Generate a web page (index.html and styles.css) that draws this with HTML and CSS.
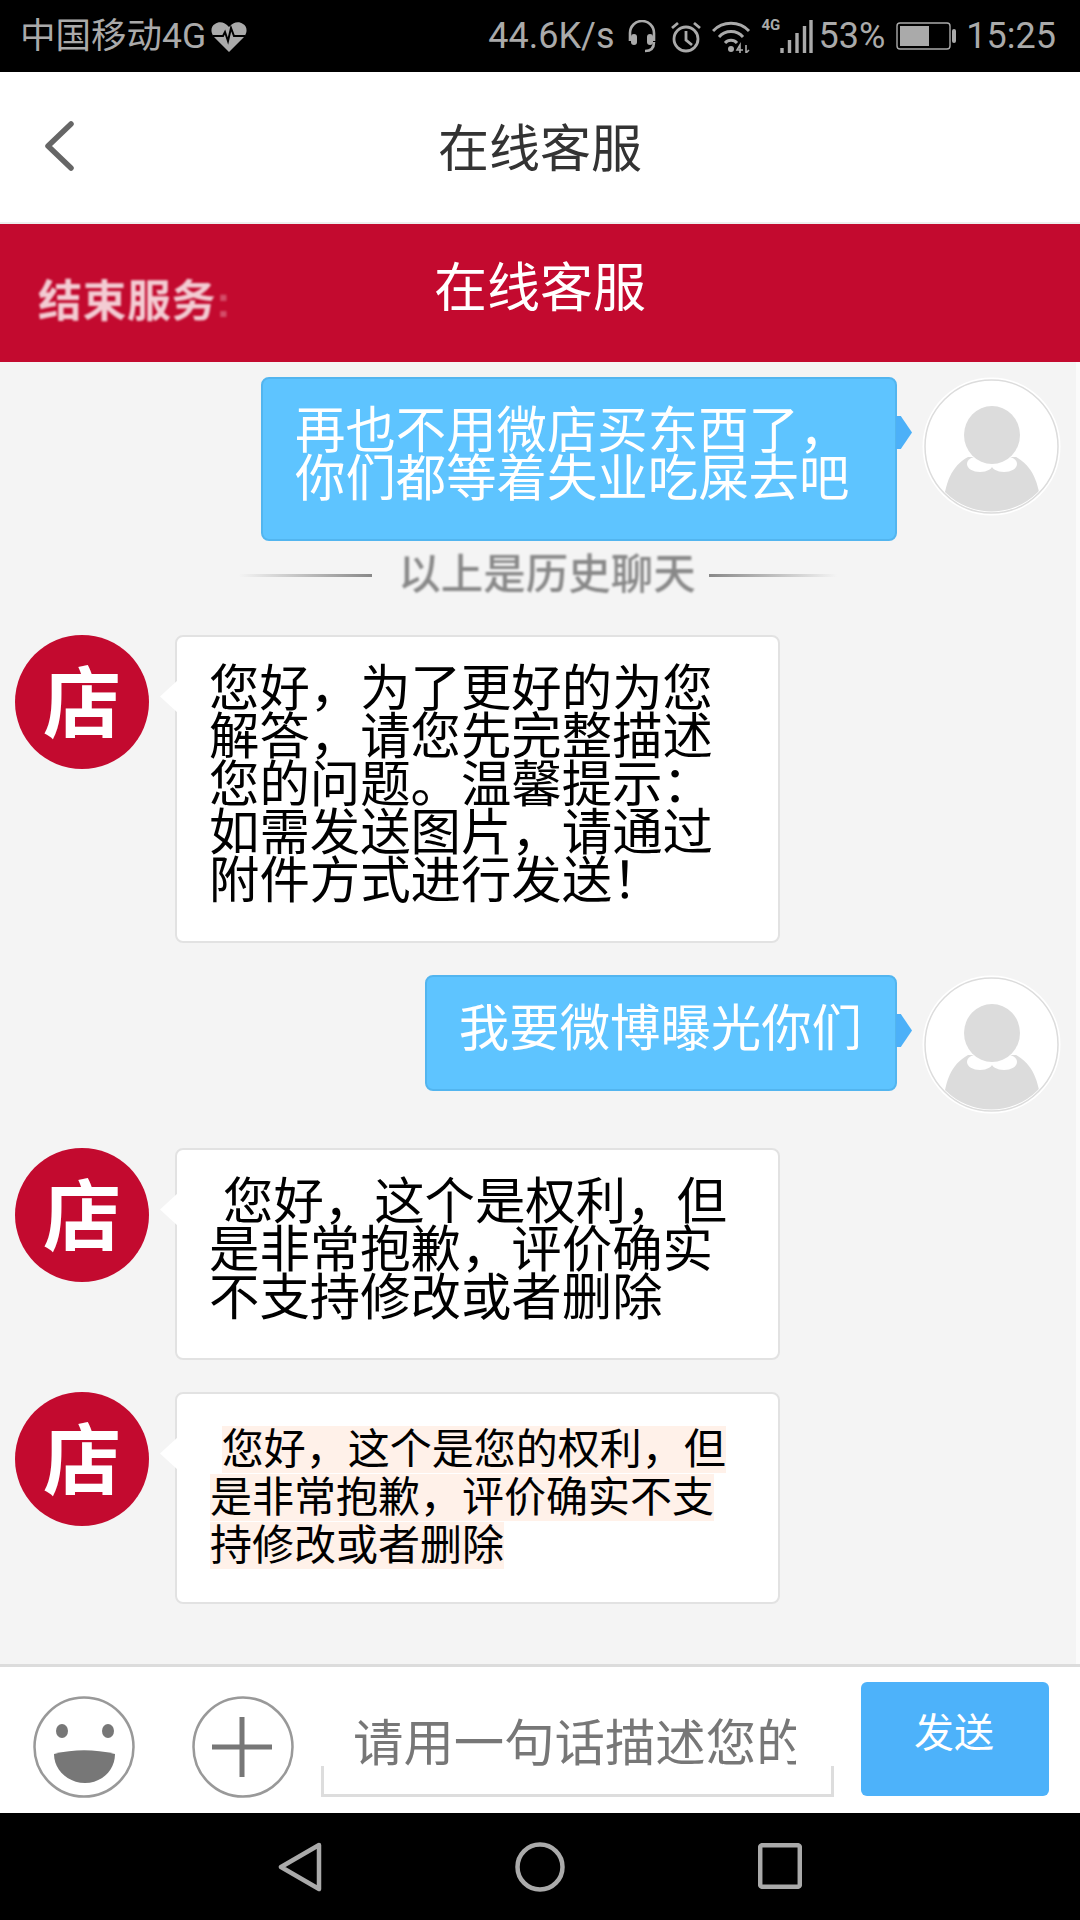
FILE: index.html
```html
<!DOCTYPE html>
<html lang="zh-CN">
<head>
<meta charset="utf-8">
<title>在线客服</title>
<link rel="stylesheet" href="styles.css">
</head>
<body>
<div class="screen">
  <header class="status">
    <div class="status-left">
      <span class="carrier">中国移动4G</span>
      <svg class="i-heart" viewBox="0 0 36 30"><path d="M18 30 3 15C-1 10 0 4 4 2c4-3 10-2 14 3 4-5 10-6 14-3 4 2 5 8 1 13Z" fill="#aaa"/><path d="M2 14h10l2-4 3 9 3-13 3 8h11" fill="none" stroke="#000" stroke-width="2"/></svg>
    </div>
    <div class="status-right">
      <span class="speed">44.6K/s</span>
      <svg class="i-headset" viewBox="0 0 30 33"><path d="M3 21V13a12 12 0 0 1 24 0v8" fill="none" stroke="#aaa" stroke-width="2.6"/><rect x="4" y="14" width="6" height="11" rx="3" fill="#aaa"/><rect x="20" y="14" width="6" height="11" rx="3" fill="#aaa"/><path d="M27 22c0 6-3 9-9 9" fill="none" stroke="#aaa" stroke-width="2.6"/></svg>
      <svg class="i-alarm" viewBox="0 0 32 33"><circle cx="16" cy="19" r="12" fill="none" stroke="#aaa" stroke-width="2.8"/><path d="M16 11v9l6 5M2 8l6-5M30 8l-6-5" fill="none" stroke="#aaa" stroke-width="2.8"/></svg>
      <svg class="i-wifi" viewBox="0 0 40 33"><path d="M1 11a25 25 0 0 1 36 0M7 17a16 16 0 0 1 24 0M13 23a8 8 0 0 1 12 0" fill="none" stroke="#aaa" stroke-width="3"/><circle cx="19" cy="29" r="3" fill="#aaa"/><path d="M28 33v-8l-3 5h6M34 25v8l3-3" fill="none" stroke="#aaa" stroke-width="1.6"/></svg>
      <span class="net">4G</span>
      <svg class="i-signal" viewBox="0 0 33 33"><path d="M2 28v5M9.5 20v13M17 13v20M24.5 6v27M31 0v33" stroke="#aaa" stroke-width="3.4" fill="none"/></svg>
      <span class="pct">53%</span>
      <svg class="i-battery" viewBox="0 0 61 28"><rect x="1" y="1" width="53" height="26" rx="3" fill="none" stroke="#aaa" stroke-width="1.4"/><rect x="4" y="4" width="29" height="20" fill="#aaa"/><rect x="56" y="7" width="4" height="14" rx="2" fill="#aaa"/></svg>
      <span class="clock">15:25</span>
    </div>
  </header>

  <nav class="topnav">
    <svg class="i-back" viewBox="0 0 30 50"><path d="M27 3 4 25l23 22" fill="none" stroke="#666" stroke-width="5.5" stroke-linecap="round" stroke-linejoin="round"/></svg>
    <div class="topnav-title">在线客服</div>
    <div></div>
  </nav>

  <section class="banner">
    <div class="banner-end">结束服务<span class="banner-colon">:</span></div>
    <div class="banner-title">在线客服</div>
    <div></div>
  </section>

  <main class="chat">
    <div class="row row-me">
      <div class="bubble bubble-me">再也不用微店买东西了，你们都等着失业吃屎去吧</div>
      <svg class="avatar-me" viewBox="0 0 139 139"><use href="#user"/></svg>
    </div>

    <div class="divider">
      <span class="divider-line divider-line-l"></span>
      <span class="divider-text">以上是历史聊天</span>
      <span class="divider-line divider-line-r"></span>
    </div>

    <div class="row row-shop">
      <div class="avatar-shop">店</div>
      <div class="bubble bubble-shop">您好，为了更好的为您解答，请您先完整描述您的问题。温馨提示：如需发送图片，请通过附件方式进行发送！</div>
    </div>

    <div class="row row-me row-short">
      <div class="bubble bubble-me">我要微博曝光你们</div>
      <svg class="avatar-me" viewBox="0 0 139 139">
        <defs>
          <symbol id="user" viewBox="0 0 139 139">
            <clipPath id="userclip"><circle cx="69.5" cy="69.5" r="65"/></clipPath>
            <circle cx="69.5" cy="69.5" r="69" fill="#fff"/>
            <circle cx="69.5" cy="69.5" r="66.5" fill="#fff" stroke="#dcdcdc" stroke-width="1.5"/>
            <g clip-path="url(#userclip)">
              <path d="M20 139C22 108 28 90 46 80h48c18 10 24 28 26 59Z" fill="#dcdcdc"/>
              <ellipse cx="58" cy="87" rx="13" ry="8" fill="#fff"/>
              <ellipse cx="82" cy="87" rx="13" ry="8" fill="#fff"/>
              <ellipse cx="70" cy="58" rx="28" ry="29" fill="#dcdcdc"/>
            </g>
          </symbol>
        </defs>
        <use href="#user"/>
      </svg>
    </div>

    <div class="row row-shop">
      <div class="avatar-shop">店</div>
      <div class="bubble bubble-shop">&nbsp;您好，这个是权利，但是非常抱歉，评价确实不支持修改或者删除</div>
    </div>

    <div class="row row-shop">
      <div class="avatar-shop">店</div>
      <div class="bubble bubble-shop bubble-small">&nbsp;<span class="mark">您好，这个是您的权利，但是非常抱歉，评价确实不支持修改或者删除</span></div>
    </div>
  </main>

  <footer class="composer">
    <svg class="i-round i-smile" viewBox="0 0 102 102"><ellipse cx="51" cy="51" rx="49.5" ry="49.5" fill="#fff" stroke="#999" stroke-width="2.5"/><ellipse cx="29" cy="35" rx="6" ry="7" fill="#777"/><ellipse cx="75" cy="35" rx="6" ry="7" fill="#777"/><path d="M21 58c20-5 40-5 61 0 0 16-13 29-30 29S21 74 21 58Z" fill="#777"/></svg>
    <svg class="i-round i-plus" viewBox="0 0 102 102"><ellipse cx="51" cy="51" rx="49.5" ry="49.5" fill="#fff" stroke="#999" stroke-width="2.5"/><path d="M50 21v60M20 51h60" stroke="#777" stroke-width="5"/></svg>
    <div class="field">
      <div class="placeholder">请用一句话描述您的</div>
      <div class="field-line"></div>
    </div>
    <button class="send">发送</button>
  </footer>

  <div class="sysnav">
    <svg class="i-nav-back" viewBox="0 0 44 50"><path d="M41 3 3 25l38 22Z" fill="none" stroke="#aaa" stroke-width="4.5" stroke-linejoin="round"/></svg>
    <svg class="i-nav-home" viewBox="0 0 50 50"><circle cx="25" cy="25" r="22.5" fill="none" stroke="#aaa" stroke-width="4.5"/></svg>
    <svg class="i-nav-square" viewBox="0 0 44 46"><rect x="2.2" y="2.2" width="39.6" height="41.6" rx="2" fill="none" stroke="#aaa" stroke-width="4.5"/></svg>
  </div>
</div>
</body>
</html>
```
FILE: styles.css
```css
* { box-sizing: border-box; }
html, body { margin: 0; padding: 0; }
body { width: 1080px; height: 1920px; overflow: hidden; font-family: "Liberation Sans", "Noto Sans CJK SC", sans-serif; }
.screen { width: 1080px; height: 1920px; display: flex; flex-direction: column; background: #f4f4f4; }

/* status bar */
.status { height: 72px; flex: none; background: #000; color: #aaa; display: flex; justify-content: space-between; align-items: center; padding: 0 24px 0 20px; font-family: Roboto, "Noto Sans CJK SC", sans-serif; font-size: 36px; }
.status-left, .status-right { display: flex; align-items: center; }
.carrier { line-height: 72px; font-size: 35.5px; }
.i-heart { width: 36px; height: 30px; margin-left: 5px; margin-top: 2px; }
.speed { margin-right: 12px; }
.i-headset { width: 30px; height: 33px; margin-right: 13px; }
.i-alarm { width: 32px; height: 33px; margin-right: 10px; }
.i-wifi { width: 40px; height: 33px; margin-right: 10px; }
.net { font-size: 15px; font-weight: 700; align-self: flex-start; margin-top: 3px; width: 18px; line-height: 15px; }
.i-signal { width: 33px; height: 33px; margin-right: 6px; }
.pct { margin-right: 11px; }
.i-battery { width: 61px; height: 28px; margin-right: 9px; }

/* top nav */
.topnav { height: 152px; flex: none; background: #fff; border-bottom: 2px solid #eee; display: grid; grid-template-columns: 1fr auto 1fr; align-items: center; padding: 0 0 0 44px; }
.i-back { width: 30px; height: 50px; margin-top: -2px; }
.topnav-title { font-size: 51px; color: #333; padding: 0 44px 4px 0; }

/* red banner */
.banner { height: 138px; flex: none; background: #c30a2f; display: grid; grid-template-columns: 1fr auto 1fr; padding-left: 38px; }
.banner-end { font-size: 44px; font-weight: 700; color: #f3ccd3; letter-spacing: 0.5px; filter: blur(1.2px); line-height: 56px; margin-top: 50px; }
.banner-colon { opacity: 0.35; }
.banner-title { font-size: 53px; color: #fff; line-height: 64px; margin-top: 33px; padding-right: 38px; }

/* chat */
.chat { flex: 1; padding-top: 15px; display: flex; flex-direction: column; border-right: 4px solid #fbfbfb; }
.row { display: flex; align-items: flex-start; }
.row-me { justify-content: flex-end; padding-right: 15px; gap: 25px; }
.row-shop { padding-left: 15px; gap: 26px; margin-bottom: 32px; }
.row-short { margin-bottom: 34px; }

.bubble { position: relative; border-radius: 8px; border: 2px solid; padding: 28px 33px 36px 32px; font-size: 50.4px; line-height: 48px; }
.bubble::after { content: ""; position: absolute; top: 37px; height: 33px; }
.bubble-me { background: #5ec4ff; border-color: #52b5ef; color: #fff; max-width: 636px; }
.bubble-me::after { right: -17px; width: 16px; background: #4cb0f8; clip-path: polygon(0 0, 30% 0, 100% 50%, 30% 100%, 0 100%); }
.bubble-shop { width: 605px; min-height: 210px; background: #fff; border-color: #e2e2e2; color: #000; }
.bubble-shop::after { left: -17px; top: 43px; width: 18px; background: #fff; clip-path: polygon(100% 0, 0 50%, 100% 100%); }
.bubble-small { font-size: 42px; padding: 32px 33px; }
.mark { background: #fff1e9; }

.avatar-me { width: 139px; height: 139px; flex: none; }
.avatar-shop { width: 134px; height: 134px; flex: none; border-radius: 50%; background: #c30a2f; color: #fff; font-size: 78px; font-weight: 700; display: flex; align-items: center; justify-content: center; padding-bottom: 8px; filter: blur(0.4px); }

.divider { height: 48px; margin: 10px 0 36px; display: flex; align-items: center; justify-content: center; }
.divider-text { font-size: 42.5px; line-height: 48px; font-weight: 500; color: #888; filter: blur(1.1px); margin: 0 13px 0 26px; }
.divider-line { height: 3px; }
.divider-line-l { width: 133px; background: linear-gradient(to right, rgba(136,136,136,0), #888); }
.divider-line-r { width: 128px; background: linear-gradient(to left, rgba(136,136,136,0), #888); }

/* composer */
.composer { height: 149px; flex: none; background: #fff; border-top: 3px solid #dcdcdc; display: flex; align-items: flex-start; padding-left: 33px; }
.i-round { width: 102px; height: 102px; flex: none; margin-top: 29px; }
.i-plus { margin-left: 57px; }
.field { width: 513px; margin: 49px 0 0 27px; flex: none; }
.placeholder { width: 443px; margin-left: 32px; height: 50px; line-height: 56px; font-size: 50.4px; color: #777; white-space: nowrap; overflow: hidden; }
.field-line { height: 31px; border: 3px solid #ddd; border-top: 0; }
.send { width: 188px; height: 114px; margin: 15px 0 0 27px; flex: none; border: 0; border-radius: 6px; background: #4db2fa; color: #fff; font-family: inherit; font-size: 40px; line-height: 48px; padding: 0 2px 12px 0; }

/* system nav */
.sysnav { height: 107px; flex: none; background: #000; display: grid; grid-template-columns: 278px 44px 193px 50px 193px 44px; align-items: start; padding-top: 29px; }
.i-nav-back { grid-column: 2; width: 44px; height: 50px; }
.i-nav-home { grid-column: 4; width: 50px; height: 50px; }
.i-nav-square { grid-column: 6; width: 44px; height: 46px; margin-top: 1px; }
```
